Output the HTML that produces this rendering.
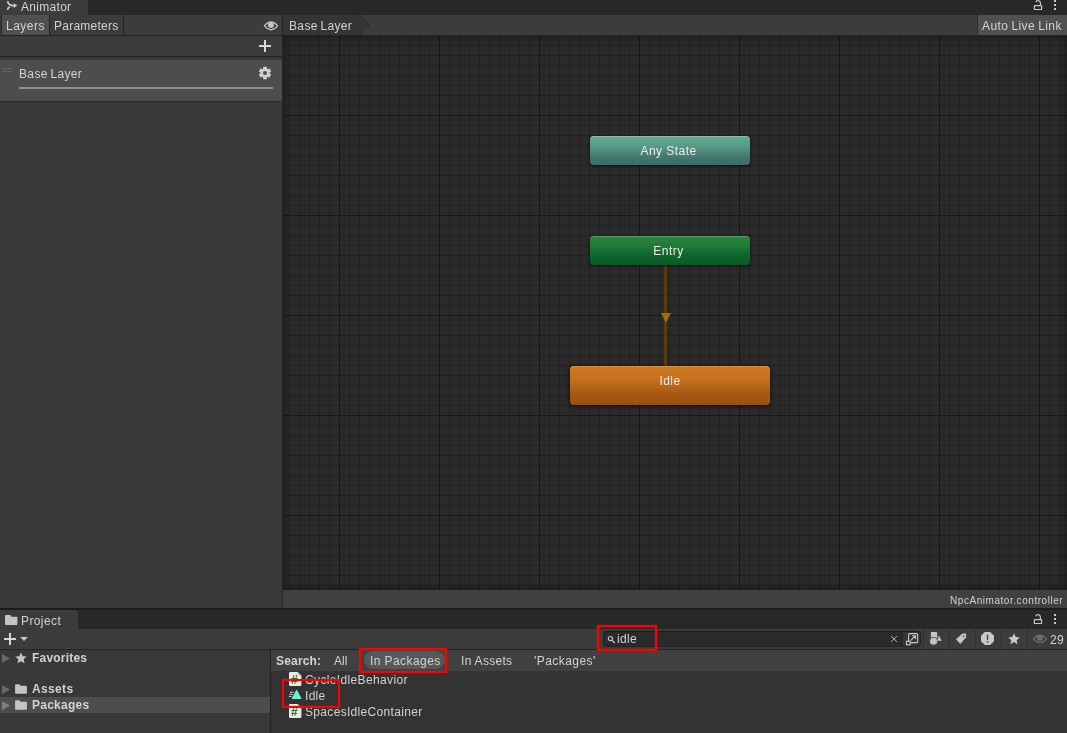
<!DOCTYPE html>
<html><head><meta charset="utf-8"><title>Animator</title>
<style>
*{box-sizing:border-box;margin:0;padding:0}
html,body{width:1067px;height:733px;overflow:hidden;background:#383838}
body{position:relative;font-family:"Liberation Sans",sans-serif;font-size:12px;color:#d2d2d2}
.a{position:absolute}
.t{position:absolute;white-space:nowrap;line-height:16px;height:16px;will-change:transform}
svg{position:absolute;overflow:visible}
</style></head><body>

<!-- top tab bar -->
<div class="a" style="left:0;top:0;width:1067px;height:15px;background:#282828"></div>
<div class="a" style="left:0;top:-4px;width:88px;height:19px;background:#3c3c3c;border-radius:0 3px 0 0"></div>
<svg style="left:0;top:0" width="20" height="12" viewBox="0 0 20 12"><path d="M7.5 1.3C8.2 3.6 9.8 5.4 12.4 5.55L14.5 5.55" fill="none" stroke="#cdcdcd" stroke-width="1.7"/><path d="M7.4 9.8C7.8 8.5 8.6 7.4 9.9 6.7" fill="none" stroke="#cdcdcd" stroke-width="1.7"/><path d="M13.7 3.2L17.3 5.55L13.7 7.9Z" fill="#cdcdcd"/></svg>
<div class="t" style="left:20.5px;top:-1px;letter-spacing:.3px">Animator</div>
<!-- lock + kebab -->
<svg style="left:1033px;top:0px" width="10" height="11" viewBox="0 0 10 11"><rect x="1.35" y="5.65" width="7.25" height="3.85" rx=".6" fill="none" stroke="#c8c8c8" stroke-width="1.2"/><path d="M7.4 5.4V3A2.4 2.4 0 0 0 2.75 2.2" fill="none" stroke="#c8c8c8" stroke-width="1.2"/></svg>
<div class="a" style="left:1054px;top:0px;width:2px;height:2px;background:#c8c8c8"></div>
<div class="a" style="left:1054px;top:4px;width:2px;height:2px;background:#c8c8c8"></div>
<div class="a" style="left:1054px;top:8px;width:2px;height:2px;background:#c8c8c8"></div>

<!-- toolbar -->
<div class="a" style="left:0;top:15px;width:1067px;height:20px;background:#3c3c3c"></div>
<div class="a" style="left:0;top:35px;width:1067px;height:1px;background:#232323"></div>
<div class="a" style="left:1px;top:15px;width:1px;height:20px;background:#242424"></div>
<div class="a" style="left:2px;top:15px;width:47px;height:20px;background:#505050"></div>
<div class="a" style="left:49px;top:15px;width:1px;height:20px;background:#242424"></div>
<div class="a" style="left:123px;top:15px;width:1px;height:20px;background:#242424"></div>
<div class="t" style="left:5.5px;top:18px;letter-spacing:.5px">Layers</div>
<div class="t" style="left:53.5px;top:18px;letter-spacing:.25px">Parameters</div>
<!-- eye -->
<svg style="left:263px;top:21px" width="16" height="10" viewBox="0 0 16 10"><path d="M1.4 4.9Q8 -3.1 14.6 4.9Q8 12.7 1.4 4.9Z" fill="none" stroke="#c4c4c4" stroke-width="1.2"/><circle cx="7.9" cy="3.9" r="3" fill="#c4c4c4"/></svg>
<!-- breadcrumb -->
<div class="a" style="left:282px;top:15px;width:1px;height:20px;background:#242424"></div>
<div class="a" style="left:283px;top:15px;width:77px;height:20px;background:#353535"></div>
<svg style="left:359px;top:15px" width="11" height="20" viewBox="0 0 11 20"><path d="M0 0L10 10L0 20Z" fill="#353535"/><path d="M0.5 0L10 10L0.5 20" fill="none" stroke="#2a2a2a" stroke-width="1"/></svg>
<div class="t" style="left:288.5px;top:18px;letter-spacing:.35px;word-spacing:-1px">Base Layer</div>
<!-- auto live link -->
<div class="a" style="left:977px;top:15px;width:1px;height:20px;background:#2c2c2c"></div>
<div class="a" style="left:978px;top:15px;width:89px;height:20px;background:#505050"></div>
<div class="t" style="left:982px;top:18px;letter-spacing:.4px;word-spacing:-.6px">Auto Live Link</div>

<!-- left panel -->
<div class="a" style="left:0;top:36px;width:282px;height:572px;background:#383838"></div>
<div class="a" style="left:0;top:36px;width:282px;height:20px;background:#3c3c3c"></div>
<div class="a" style="left:0;top:56px;width:282px;height:1px;background:#232323"></div>
<div class="a" style="left:259px;top:45px;width:12px;height:2px;background:#d6d6d6"></div>
<div class="a" style="left:264px;top:40px;width:2px;height:12px;background:#d6d6d6"></div>
<div class="a" style="left:0;top:60px;width:282px;height:41px;background:#4d4d4d"></div>
<div class="a" style="left:0;top:101px;width:282px;height:1px;background:#2a2a2a"></div>
<div class="a" style="left:2px;top:68px;width:10px;height:1px;background:#636363"></div>
<div class="a" style="left:2px;top:71px;width:10px;height:1px;background:#636363"></div>
<div class="t" style="left:18.5px;top:66px;letter-spacing:.35px;word-spacing:-1px">Base Layer</div>
<div class="a" style="left:19px;top:87px;width:254px;height:2px;background:#8e8e8e"></div>
<!-- gear -->
<svg style="left:258px;top:66px" width="14" height="14" viewBox="-7 -7 14 14"><g fill="#d0d0d0"><circle r="4.7"/><rect x="-1.9" y="-6.15" width="3.8" height="12.3" rx=".4"/><rect x="-1.9" y="-6.15" width="3.8" height="12.3" rx=".4" transform="rotate(60)"/><rect x="-1.9" y="-6.15" width="3.8" height="12.3" rx=".4" transform="rotate(120)"/></g><circle r="2" fill="#4d4d4d"/></svg>
<div class="a" style="left:282px;top:36px;width:1px;height:572px;background:#282828"></div>

<!-- graph -->
<div class="a" id="graph" style="left:283px;top:36px;width:784px;height:554px;background-color:#2a2a2a;
background-image:
linear-gradient(90deg,rgba(0,0,0,.27) 1px,transparent 1px),
linear-gradient(rgba(0,0,0,.27) 1px,transparent 1px),
linear-gradient(90deg,rgba(0,0,0,.19) 1px,transparent 1px),
linear-gradient(rgba(0,0,0,.19) 1px,transparent 1px);
background-size:100px 100px,100px 100px,10px 10px,10px 10px;
background-position:56px 0,0 79px,6px 0,0 9px"></div>
<div class="a" style="left:283px;top:36px;width:784px;height:554px;box-shadow:inset 0 0 8px 0 rgba(0,0,0,.5)"></div>

<!-- transition -->
<div class="a" style="left:664px;top:265px;width:3px;height:101px;background:linear-gradient(90deg,#46320f,#644005 34%,#644005 66%,#46320f)"></div>
<svg style="left:660.5px;top:312.8px" width="10" height="10" viewBox="0 0 10 10"><path d="M0 0H10L5 9.8Z" fill="#a46c02"/></svg>

<!-- nodes -->
<div class="a" style="left:590px;top:136px;width:160px;height:29px;border-radius:4px;background:linear-gradient(#61a893 0%,#5a9d8a 32%,#4a837a 58%,#3f726a 82%,#3c6c65 100%);box-shadow:0 1px 3px rgba(0,0,0,.6),inset 0 1px 0 rgba(255,255,255,.25)"></div>
<div class="t" style="left:590px;top:143px;width:157px;text-align:center;color:#eee;letter-spacing:.45px">Any State</div>
<div class="a" style="left:590px;top:236px;width:160px;height:29px;border-radius:4px;background:linear-gradient(#2c8540 0%,#1e7a38 35%,#0f6a2e 60%,#065a26 100%);box-shadow:0 1px 3px rgba(0,0,0,.6),inset 0 1px 0 rgba(255,255,255,.2)"></div>
<div class="t" style="left:590px;top:243px;width:157px;text-align:center;color:#eee;letter-spacing:.45px">Entry</div>
<div class="a" style="left:570px;top:366px;width:200px;height:39px;border-radius:4px;background:linear-gradient(#cf7a22 0%,#c4701d 35%,#a85a15 70%,#9a5012 100%);box-shadow:0 1px 4px rgba(0,0,0,.7),inset 0 1px 0 rgba(255,255,255,.2)"></div>
<div class="t" style="left:570px;top:373px;width:200px;text-align:center;color:#eee;letter-spacing:.45px">Idle</div>

<!-- graph footer -->
<div class="a" style="left:283px;top:590px;width:784px;height:18px;background:#404040"></div>
<div class="t" style="right:3.5px;top:592.5px;font-size:10px;letter-spacing:.55px">NpcAnimator.controller</div>

<!-- separator -->
<div class="a" style="left:0;top:608px;width:1067px;height:2px;background:#1c1c1c"></div>

<!-- project tab bar -->
<div class="a" style="left:0;top:610px;width:1067px;height:19px;background:#282828"></div>
<div class="a" style="left:0;top:610px;width:78px;height:19px;background:#3c3c3c;border-radius:0 3px 0 0"></div>
<svg style="left:4.7px;top:615.2px" width="12.4" height="10" viewBox="0 0 12.4 10"><path d="M0 .7Q0 0 .7 0H5.2L6.4 1.7H11.7Q12.4 1.7 12.4 2.4V9.3Q12.4 10 11.7 10H.7Q0 10 0 9.3Z" fill="#c4c4c4"/></svg>
<div class="t" style="left:21px;top:613px;letter-spacing:.4px">Project</div>
<svg style="left:1033px;top:614px" width="10" height="11" viewBox="0 0 10 11"><rect x="1.35" y="5.65" width="7.25" height="3.85" rx=".6" fill="none" stroke="#c8c8c8" stroke-width="1.2"/><path d="M7.4 5.4V3A2.4 2.4 0 0 0 2.75 2.2" fill="none" stroke="#c8c8c8" stroke-width="1.2"/></svg>
<div class="a" style="left:1054px;top:614px;width:2px;height:2px;background:#c8c8c8"></div>
<div class="a" style="left:1054px;top:618px;width:2px;height:2px;background:#c8c8c8"></div>
<div class="a" style="left:1054px;top:622px;width:2px;height:2px;background:#c8c8c8"></div>

<!-- project toolbar -->
<div class="a" style="left:0;top:629px;width:1067px;height:20px;background:#3c3c3c"></div>
<div class="a" style="left:0;top:649px;width:1067px;height:1px;background:#232323"></div>
<div class="a" style="left:4px;top:638px;width:12px;height:2px;background:#d6d6d6"></div>
<div class="a" style="left:9px;top:633px;width:2px;height:12px;background:#d6d6d6"></div>
<svg style="left:20px;top:637px" width="8" height="4" viewBox="0 0 8 4"><path d="M0 0H8L4 4Z" fill="#c4c4c4"/></svg>
<!-- search field -->
<div class="a" style="left:603px;top:631px;width:318px;height:16px;border-radius:4px;background:#2a2a2a;border:1px solid #242424;border-top-color:#1c1c1c"></div>
<div class="a" style="left:903px;top:632px;width:17px;height:14px;border-radius:0 3px 3px 0;background:#353535"></div>
<svg style="left:607px;top:635px" width="9" height="9" viewBox="0 0 9 9"><circle cx="3.4" cy="3.6" r="2.1" fill="none" stroke="#c8c8c8" stroke-width="1.2"/><path d="M5 5.2L7.8 8" stroke="#c8c8c8" stroke-width="1.3"/></svg>
<div class="t" style="left:616.5px;top:631px;letter-spacing:.3px">idle</div>
<svg style="left:890px;top:635px" width="8" height="8" viewBox="0 0 8 8"><path d="M1.1 1.1L7 7M7 1.1L1.1 7" stroke="#b0b0b0" stroke-width="1"/></svg>
<svg style="left:905px;top:632px" width="14" height="14" viewBox="0 0 14 14"><rect x="3.6" y="1.6" width="9" height="9" rx="1.2" fill="none" stroke="#c8c8c8" stroke-width="1.1"/><rect x="1.6" y="9.2" width="3.6" height="3.6" fill="#353535" stroke="#c8c8c8" stroke-width="1.1"/><path d="M5.8 8.4L10.2 4M7.2 3.8H10.4V7" fill="none" stroke="#c8c8c8" stroke-width="1.1"/></svg>
<!-- icon buttons -->
<div class="a" style="left:923px;top:629px;width:1px;height:20px;background:#303030"></div>
<div class="a" style="left:949px;top:629px;width:1px;height:20px;background:#303030"></div>
<div class="a" style="left:975px;top:629px;width:1px;height:20px;background:#303030"></div>
<div class="a" style="left:1001px;top:629px;width:1px;height:20px;background:#303030"></div>
<div class="a" style="left:1027px;top:629px;width:1px;height:20px;background:#303030"></div>
<svg style="left:929px;top:631px" width="14" height="15" viewBox="0 0 14 15"><rect x="1.9" y="1" width="6.2" height="6" fill="#c4c4c4"/><circle cx="4.55" cy="10.25" r="4.2" fill="#3c3c3c"/><circle cx="4.55" cy="10.25" r="3.6" fill="#c4c4c4"/><path d="M9.7 4.1L13 9.9H7.9Z" fill="#c4c4c4" stroke="#3c3c3c" stroke-width=".3"/></svg>
<svg style="left:955px;top:632px" width="13" height="13" viewBox="0 0 13 13"><path d="M7.5 1.5H11.1V5.3L5.4 12.1L.9 7.3Z" fill="#c4c4c4"/><circle cx="8.6" cy="4.4" r=".8" fill="#3c3c3c"/></svg>
<svg style="left:981px;top:632px" width="13" height="13" viewBox="0 0 13 13"><path d="M3.8 0H9.2L13 3.8V9.2L9.2 13H3.8L0 9.2V3.8Z" fill="#c8c8c8"/><rect x="5.8" y="2.6" width="1.4" height="5.2" fill="#3c3c3c"/><rect x="5.8" y="9" width="1.4" height="1.5" fill="#3c3c3c"/></svg>
<svg style="left:1008px;top:633px" width="12" height="12" viewBox="0 0 12 12"><path d="M6 .3L7.7 4.1L11.8 4.5L8.7 7.2L9.6 11.2L6 9.1L2.4 11.2L3.3 7.2L.2 4.5L4.3 4.1Z" fill="#c8c8c8"/></svg>
<svg style="left:1032.3px;top:634.2px" width="16" height="10" viewBox="0 0 16 10"><path d="M1.4 4.9Q8 -2.8 14.6 4.9Q8 12.4 1.4 4.9Z" fill="none" stroke="#6c6c6c" stroke-width="1.2"/><circle cx="7.9" cy="3.9" r="3" fill="#6c6c6c"/></svg>
<div class="t" style="left:1049.5px;top:631.5px;letter-spacing:.3px">29</div>

<!-- project left tree -->
<div class="a" style="left:0;top:650px;width:270px;height:83px;background:#383838"></div>
<div class="a" style="left:270px;top:650px;width:1px;height:83px;background:#232323"></div>
<div class="a" style="left:0;top:697px;width:270px;height:16px;background:#4d4d4d"></div>
<svg style="left:2.3px;top:654px" width="8" height="9" viewBox="0 0 8 9"><path d="M0 0L8 4.5L0 9Z" fill="#6a6a6a"/></svg>
<svg style="left:2.3px;top:685px" width="8" height="9" viewBox="0 0 8 9"><path d="M0 0L8 4.5L0 9Z" fill="#6a6a6a"/></svg>
<svg style="left:2.3px;top:701px" width="8" height="9" viewBox="0 0 8 9"><path d="M0 0L8 4.5L0 9Z" fill="#7e7e7e"/></svg>
<svg style="left:15px;top:652px" width="12" height="12" viewBox="0 0 13 13"><path d="M6.5 .6L8.3 4.6L12.6 5L9.4 7.9L10.3 12.2L6.5 10L2.7 12.2L3.6 7.9L.4 5L4.7 4.6Z" fill="#c4c4c4"/></svg>
<svg style="left:15px;top:684px" width="12" height="10" viewBox="0 0 13 11"><path d="M0 1.2Q0 .2 1 .2H4.6L6 1.8H12Q13 1.8 13 2.8V9.8Q13 10.8 12 10.8H1Q0 10.8 0 9.8Z" fill="#c4c4c4"/></svg>
<svg style="left:15px;top:700px" width="12" height="10" viewBox="0 0 13 11"><path d="M0 1.2Q0 .2 1 .2H4.6L6 1.8H12Q13 1.8 13 2.8V9.8Q13 10.8 12 10.8H1Q0 10.8 0 9.8Z" fill="#c4c4c4"/></svg>
<div class="t" style="left:31.5px;top:650px;font-weight:bold;letter-spacing:.2px">Favorites</div>
<div class="t" style="left:32px;top:681px;font-weight:bold;letter-spacing:.35px">Assets</div>
<div class="t" style="left:31.5px;top:697px;font-weight:bold;letter-spacing:.25px">Packages</div>

<!-- project right -->
<div class="a" style="left:271px;top:650px;width:796px;height:21px;background:#414141"></div>
<div class="a" style="left:271px;top:671px;width:796px;height:62px;background:#333"></div>
<div class="t" style="left:276px;top:653px;font-weight:bold;letter-spacing:.18px">Search:</div>
<div class="t" style="left:334px;top:653px;letter-spacing:0">All</div>
<div class="a" style="left:364px;top:651px;width:81px;height:18px;border-radius:9px;background:#585858"></div>
<div class="t" style="left:369.5px;top:653px;letter-spacing:.42px">In Packages</div>
<div class="t" style="left:460.5px;top:653px;letter-spacing:.3px">In Assets</div>
<div class="t" style="left:533.5px;top:653px;letter-spacing:.45px">'Packages'</div>

<!-- rows -->
<svg style="left:289px;top:672px;will-change:transform" width="13" height="14" viewBox="0 0 13 14"><path d="M0 1.2Q0 0 1.2 0H8.6L12.4 3.8V12.8Q12.4 14 11.2 14H1.2Q0 14 0 12.8Z" fill="#ebebeb"/><path d="M8.6 0L12.4 3.8H9.4Q8.6 3.8 8.6 3Z" fill="#c9c9c9"/><text x="2.1" y="11.7" font-family="Liberation Sans,sans-serif" font-weight="bold" font-size="12" fill="#1f7a22">#</text></svg>
<div class="t" style="left:305px;top:672px;letter-spacing:.36px">CycleIdleBehavior</div>
<svg style="left:288px;top:689px" width="14" height="11" viewBox="0 0 14 11"><path d="M8 1.4Q8.6 .3 9.2 1.4L13.3 8.9Q13.8 10 12.6 10H4.6Q3.4 10 3.9 8.9Z" fill="#70f0dc"/><path d="M2 3.2H5.6M1.3 5.3H4.6M.8 7.4H3.6" stroke="#d4d4d4" stroke-width="1"/></svg>
<div class="t" style="left:305px;top:688px;letter-spacing:.3px">Idle</div>
<svg style="left:289px;top:704px;will-change:transform" width="13" height="14" viewBox="0 0 13 14"><path d="M0 1.2Q0 0 1.2 0H8.6L12.4 3.8V12.8Q12.4 14 11.2 14H1.2Q0 14 0 12.8Z" fill="#ebebeb"/><path d="M8.6 0L12.4 3.8H9.4Q8.6 3.8 8.6 3Z" fill="#c9c9c9"/><text x="2.1" y="11.7" font-family="Liberation Sans,sans-serif" font-weight="bold" font-size="12" fill="#1f7a22">#</text></svg>
<div class="t" style="left:305px;top:704px;letter-spacing:.32px">SpacesIdleContainer</div>
<div class="a" style="left:271px;top:650px;width:796px;height:0"></div>

<!-- red annotation boxes -->
<svg style="left:0;top:0" width="1067" height="733" viewBox="0 0 1067 733"><rect x="597.95" y="625.95" width="58.02" height="23.98" fill="none" stroke="#ff0000" stroke-width="2.2"/><rect x="360.00" y="649.00" width="85.97" height="22.93" fill="none" stroke="#ff0000" stroke-width="2.2"/><rect x="283.00" y="680.00" width="55.97" height="26.93" fill="none" stroke="#ff0000" stroke-width="2.2"/></svg>

</body></html>
